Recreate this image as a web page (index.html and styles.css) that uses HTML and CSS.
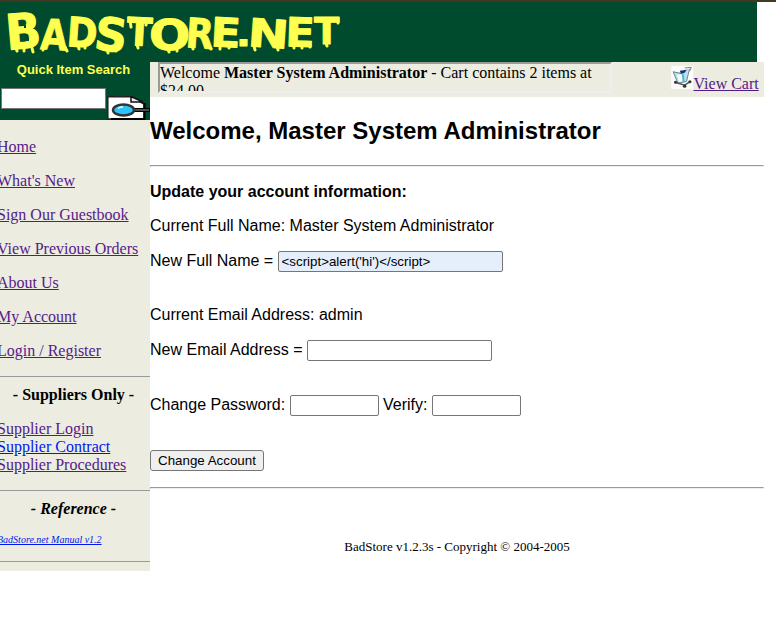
FILE: index.html
```html
<!DOCTYPE html>
<html lang="en">
<head>
<meta charset="utf-8">
<title>BadStore.net</title>
<link rel="stylesheet" href="styles.css">
</head>
<body>
<header class="banner">
<svg class="logo" width="350" height="60" viewBox="0 2 350 60" role="img" aria-label="BadStore.net">
<g class="logo-text">
<text transform="translate(7 50) rotate(-5) scale(.95 1)" font-size="49">B</text>
<text transform="translate(40 49) rotate(3) scale(.82 1)" font-size="42">A</text>
<text transform="translate(66 46) rotate(4) scale(.9 1)" font-size="41">D</text>
<text transform="translate(93 49) rotate(7) scale(.98 1)" font-size="46">S</text>
<text transform="translate(126 45) rotate(3) scale(.96 1)" font-size="39">T</text>
<text transform="translate(149 50) scale(1.13 1)" font-size="43">O</text>
<text transform="translate(185 47) rotate(4) scale(.88 1)" font-size="41">R</text>
<text transform="translate(210 46) rotate(3) scale(1.1 1)" font-size="40">E</text>
<text transform="translate(236 46) scale(1.15 1)" font-size="34">.</text>
<text transform="translate(247 46) rotate(4) scale(1.26 1)" font-size="39">N</text>
<text transform="translate(285 46) rotate(2) scale(1.07 1)" font-size="40">E</text>
<text transform="translate(314 44) scale(1 1)" font-size="37">T</text>
</g>
<path class="drips" d="M16 48l1 3M24 48v3M32 48l1 4M43 47v3M65 47l2 4M78 45l1 4M85 46v2M107 49l1 4M116 48v3M137 44l1 4M130 20l1 7M147 20l-1 5M168 49l1 3M177 48v3M192 45l1 4M208 46l3 3M220 46v3M229 46v2M254 46l1 4M277 45l1 5M294 46v2M302 46v2M310 45v2M326 43l1 3M338 19v4"/>
<path class="cuts" d="M25 28v-3M28 41v-3M83 27v-3M165 29v-3M174 30v-3M199 27v-2"/>
</svg>
</header>
<div class="page">
<aside class="side">
<div class="search">
<div class="search-title">Quick Item Search</div>
<div class="search-row"><input class="search-box" type="text"><svg class="search-icon" width="43" height="24" viewBox="0 0 43 24"><path d="M.8.8H24L37 8v15H.8z" fill="#fff" stroke="#222" stroke-width="1.5"/><path d="M25 0h14v7z" fill="#004b2e"/><path d="M24 .5v5.500h12z" fill="#eee" stroke="#111" stroke-width="1.500"/><path d="M37.500 7v16H4" fill="none" stroke="#000" stroke-width="2"/><path d="M27 14h16" stroke="#000" stroke-width="4"/><path d="M28 14h14" stroke="#999"/><ellipse cx="16.500" cy="14" rx="10.500" ry="5.500" fill="#2cc4fa" stroke="#333" stroke-width="2.400"/><path d="M11 12.500q2-2 5-1.500" stroke="#fff" stroke-width="1.500" fill="none"/></svg></div>
</div>
<nav class="menu">
<p><a href="#">Home</a></p>
<p><a href="#">What's New</a></p>
<p><a href="#">Sign Our Guestbook</a></p>
<p><a href="#">View Previous Orders</a></p>
<p><a href="#">About Us</a></p>
<p><a href="#">My Account</a></p>
<p><a href="#">Login / Register</a></p>
</nav>
<hr class="side-rule">
<div class="side-title">- Suppliers Only -</div>
<nav class="suppliers"><a href="#">Supplier Login</a><br><a class="fresh" href="#">Supplier Contract</a><br><a href="#">Supplier Procedures</a></nav>
<hr class="side-rule">
<div class="side-title ref">- Reference -</div>
<div class="manual"><a class="fresh" href="#">BadStore.net Manual v1.2</a></div>
<hr class="side-rule">
</aside>
<main class="main">
<div class="status">
<div class="welcome">Welcome <b>Master System Administrator</b> - Cart contains 2 items at $24.00</div>
<div class="cart"><svg width="22.5" height="23" viewBox="0 0 23 24"><path d="M0 0h23v24H0z" fill="#fcfcfa"/><path d="M2 6l11 1 5-5-2 14-9 2z" fill="#b9dfec"/><path d="M6 9l7-1-1 8-4 1z" fill="#f4fdff"/><path d="M2 6l9 2 5-4M2 6l5 12 9-2 3-13" fill="none" stroke="#68808c"/><path d="M14 2l7-.5-2 4" fill="none" stroke="#777"/><path d="M9 5l7-1-2 3-4 1z" fill="#173080"/><path d="M12 8l1 9" stroke="#45bcc8" stroke-width="2"/><path d="M4 17l10 3 6-4" fill="none" stroke="#555" stroke-width="1.500"/><g fill="#333"><circle cx="4.500" cy="17" r="1.600"/><circle cx="14" cy="21" r="1.800"/><circle cx="19.500" cy="16.500" r="1.600"/></g></svg><a href="#">View Cart</a></div>
</div>
<h1>Welcome, Master System Administrator</h1>
<hr>
<form class="account">
<h2>Update your account information:</h2>
<p>Current Full Name: Master System Administrator</p>
<p class="field"><label for="name">New Full Name =</label><input id="name" class="name" type="text" value="&lt;script&gt;alert('hi')&lt;/script&gt;"></p>
<p class="group">Current Email Address: admin</p>
<p class="field"><label for="email">New Email Address =</label><input id="email" class="email" type="text"></p>
<p class="field passwords"><label for="pass">Change Password:</label><input id="pass" class="pass" type="password"><label for="verify">Verify:</label><input id="verify" class="pass" type="password"></p>
<button type="button">Change Account</button>
</form>
<hr>
<footer>BadStore v1.2.3s - Copyright © 2004-2005</footer>
</main>
</div>
</body>
</html>
```
FILE: styles.css
```css
* { box-sizing: border-box; }
body { margin: 0; height: 640px; overflow: hidden; background: #fff; color: #000; border-top: 2px solid #443822; font: 16px/18px "Liberation Serif", serif; }
a { color: #551a8b; text-decoration: underline; }
a.fresh { color: #0018ee; }
.banner { width: 757px; height: 60px; background: #004b2e; }
.logo { display: block; }
.logo-text { font-family: "DejaVu Sans", sans-serif; font-weight: bold; fill: #ffff4f; stroke: #ffff4f; stroke-width: 1; stroke-linejoin: round; }
.drips { fill: none; stroke: #ffff4f; stroke-width: 3; stroke-linecap: round; }
.cuts { fill: none; stroke: #004b2e; stroke-width: 2; }
.page { display: flex; }
.side { width: 150px; height: 509px; background: #ecece0; overflow: hidden; }
.search { height: 58px; background: #004b2e; }
.search-title { height: 26px; padding-right: 3px; text-align: center; color: #ffff4f; font: bold 13px/16px "Liberation Sans", sans-serif; }
.search-row { display: flex; padding-left: 1px; }
.search-box { width: 105px; height: 21px; border: 1px solid #767676; border-radius: 0; }
.search-icon { margin: 8px 0 0 1px; flex: none; }
.menu { padding-top: 18px; margin-left: -3px; }
.menu p { margin: 0 0 16px; white-space: nowrap; }
.side-rule { margin: 0; height: 1px; border: 0; background: #999; }
.side-title { margin-top: 9px; padding-right: 3px; text-align: center; font-weight: bold; }
.ref { font-style: italic; }
.suppliers { margin: 16px 0 16px -3px; white-space: nowrap; }
.manual { margin: 13px 0 12px -3px; font-size: 10px; font-style: italic; }
.main { width: 614px; font-family: "Liberation Sans", sans-serif; }
.status { display: flex; height: 35px; padding-left: 8px; background: #ecece0; font-family: "Liberation Serif", serif; }
.welcome { width: 454px; height: 31px; overflow: hidden; border: 2px solid; border-color: #9a9a9a #eee #eee #9a9a9a; }
.cart { display: flex; align-items: flex-start; margin-left: 59px; padding-top: 4px; white-space: nowrap; }
.cart a { margin-top: 9px; }
h1 { margin: 20px 0; font-size: 24px; line-height: 28px; }
hr { margin: 0; border: 1px solid; border-color: #9a9a9a #eee #eee #9a9a9a; }
.account p { margin: 0 0 16px; }
h2 { margin: 16px 0; font-size: 16px; line-height: 18px; }
.account .field { height: 21px; display: flex; gap: 4.4px; }
.account label { line-height: 19px; }
.account .group { margin-top: 34px; }
.account .passwords { margin: 34px 0; }
.account input { height: 21px; padding: 1px 2px; border: 1px solid #767676; border-radius: 2px; font: 13.333px "Liberation Sans", sans-serif; }
.account .name { width: 225px; padding-left: 3px; background: #e5effc; }
.account .email { width: 185px; }
.account .pass { width: 89px; }
button { display: block; width: 114px; height: 21px; margin-bottom: 16px; padding: 0; border: 1px solid #767676; border-radius: 3px; background: #efefef; color: #000; font: 13.333px "Liberation Sans", sans-serif; }
footer { margin-top: 50px; text-align: center; font: 13px/16px "Liberation Serif", serif; }
```
